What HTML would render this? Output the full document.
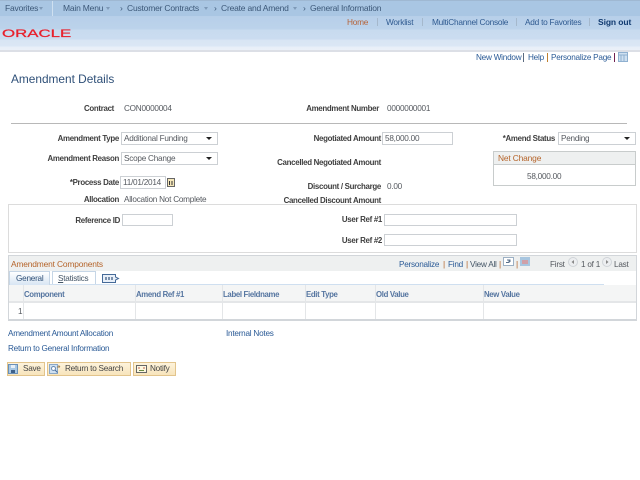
<!DOCTYPE html>
<html><head><meta charset="utf-8"><style>
html,body{margin:0;padding:0;background:#fff;}
body{width:640px;height:480px;position:relative;overflow:hidden;font-family:"Liberation Sans",Arial,sans-serif;font-size:8.2px;letter-spacing:-.24px;color:#55595f;}
#w{position:absolute;left:0;top:0;width:640px;height:480px;filter:blur(.25px);}
.a{position:absolute;white-space:nowrap;line-height:11px;}
.n{font-size:8.5px;letter-spacing:-.2px;color:#3c5878;}
.t{font-size:8.3px;letter-spacing:-.25px;color:#2f5a90;}
.l{position:absolute;white-space:nowrap;line-height:11px;font-weight:bold;color:#3e3e3e;font-size:7.9px;letter-spacing:-.3px;text-align:right;}
.b{position:absolute;box-sizing:border-box;}
.i{position:absolute;box-sizing:border-box;background:#fff;border:1px solid #ccd0d4;line-height:11px;padding:0 2px;color:#55595f;white-space:nowrap;}
.s:after{content:"";position:absolute;right:5px;top:4px;border-left:3px solid transparent;border-right:3px solid transparent;border-top:3px solid #222;}
.lk{color:#2a5a96;}
.h{font-weight:bold;color:#5575a0;font-size:7.8px;letter-spacing:-.33px;}
.o{color:#b5642a;font-size:8.4px;letter-spacing:-.15px;}
.btn{position:absolute;box-sizing:border-box;height:14px;top:362px;background:linear-gradient(#fdf3dc,#f7e4bc);border:1px solid #e2c48c;line-height:12px;color:#444;white-space:nowrap;}
.d{position:absolute;top:7px;border-left:2.5px solid transparent;border-right:2.5px solid transparent;border-top:3px solid #7f9ab8;}
svg{position:absolute;}
</style></head><body><div id="w">
<div class="b" style="left:0;top:0;width:640px;height:51px;background:linear-gradient(#b4cde8 0,#b4cde8 16px,#b7cfe9 16px,#bcd3eb 29px,#c8dbef 30px,#cbdcf0 39px,#d8e5f4 40px,#dbe7f5 46px,#e8eff8 47px,#eaf0f8 50px);"></div>
<div class="b" style="left:0;top:0;width:640px;height:16px;background:#a9c6e3;border-top:1px solid #9fb8d2;"></div>
<div class="b" style="left:0;top:50px;width:640px;height:2px;background:#dcdfe6;"></div>
<div class="b" style="left:52px;top:1px;width:1px;height:15px;background:#cfe0f0;"></div>
<div class="a n" style="left:5px;top:3px;">Favorites</div><div class="d" style="left:39px"></div>
<div class="a n" style="left:63px;top:3px;">Main Menu</div><div class="d" style="left:106px"></div>
<div class="a n" style="left:120px;top:3px;">›</div>
<div class="a n" style="left:127px;top:3px;">Customer Contracts</div><div class="d" style="left:204px"></div>
<div class="a n" style="left:214px;top:3px;">›</div>
<div class="a n" style="left:221px;top:3px;">Create and Amend</div><div class="d" style="left:293px"></div>
<div class="a n" style="left:303px;top:3px;">›</div>
<div class="a n" style="left:310px;top:3px;">General Information</div>
<div class="a" style="left:2px;top:27px;color:#e8202c;font-size:11px;letter-spacing:0;line-height:14px;transform:scaleX(1.53);transform-origin:left;-webkit-text-stroke:.25px #e8202c;">ORACLE</div>
<div class="a t" style="left:347px;top:17px;color:#b5643a;">Home</div>
<div class="b" style="left:377px;top:18px;width:1px;height:8px;background:#a5b8cc;"></div>
<div class="a t" style="left:386px;top:17px;">Worklist</div>
<div class="b" style="left:422px;top:18px;width:1px;height:8px;background:#a5b8cc;"></div>
<div class="a t" style="left:432px;top:17px;">MultiChannel Console</div>
<div class="b" style="left:516px;top:18px;width:1px;height:8px;background:#a5b8cc;"></div>
<div class="a t" style="left:525px;top:17px;">Add to Favorites</div>
<div class="b" style="left:589px;top:18px;width:1px;height:8px;background:#a5b8cc;"></div>
<div class="a" style="left:598px;top:17px;color:#103a70;font-weight:bold;font-size:8.5px;letter-spacing:-.1px;">Sign out</div>

<div class="a lk" style="left:476px;top:52px;">New Window</div>
<div class="b" style="left:523px;top:53px;width:1px;height:9px;background:#5a6a80;"></div>
<div class="a lk" style="left:528px;top:52px;">Help</div>
<div class="b" style="left:547px;top:53px;width:1px;height:9px;background:#c08030;"></div>
<div class="a lk" style="left:551px;top:52px;">Personalize Page</div>
<div class="b" style="left:614px;top:53px;width:1px;height:9px;background:#702050;"></div>
<svg style="left:618px;top:52px" width="10" height="10"><rect x=".5" y=".5" width="9" height="9" fill="#cfe0f0" stroke="#8fb0d0"/><path d="M1 3h8M3 3v6M6 3v6" stroke="#8fb0d0" fill="none"/></svg>

<div class="a" style="left:11px;top:72px;font-size:11.85px;letter-spacing:0;line-height:14px;color:#2f5078;">Amendment Details</div>

<div class="l" style="right:526px;top:103px;">Contract</div>
<div class="a" style="left:124px;top:103px;">CON0000004</div>
<div class="l" style="right:261px;top:103px;">Amendment Number</div>
<div class="a" style="left:387px;top:103px;">0000000001</div>
<div class="b" style="left:11px;top:123px;width:616px;height:1px;background:#b8b8b8;"></div>

<div class="l" style="right:521px;top:133px;">Amendment Type</div>
<div class="i s" style="left:121px;top:132px;width:97px;height:13px;">Additional Funding</div>
<div class="l" style="right:521px;top:153px;">Amendment Reason</div>
<div class="i s" style="left:121px;top:152px;width:97px;height:13px;">Scope Change</div>
<div class="l" style="right:521px;top:177px;">*Process Date</div>
<div class="i" style="left:120px;top:176px;width:46px;height:13px;">11/01/2014</div>
<svg style="left:167px;top:178px" width="8" height="9"><rect x=".5" y=".5" width="7" height="8" fill="#f4e6b8" stroke="#666"/><path d="M2.5 3v4M5 3v4" stroke="#333" fill="none"/></svg>
<div class="l" style="right:521px;top:194px;">Allocation</div>
<div class="a" style="left:124px;top:194px;">Allocation Not Complete</div>

<div class="l" style="right:259px;top:133px;">Negotiated Amount</div>
<div class="i" style="left:382px;top:132px;width:71px;height:13px;">58,000.00</div>
<div class="l" style="right:259px;top:157px;">Cancelled Negotiated Amount</div>
<div class="l" style="right:259px;top:181px;">Discount / Surcharge</div>
<div class="a" style="left:387px;top:181px;">0.00</div>
<div class="l" style="right:259px;top:195px;">Cancelled Discount Amount</div>

<div class="l" style="right:85px;top:133px;">*Amend Status</div>
<div class="i s" style="left:558px;top:132px;width:78px;height:13px;">Pending</div>
<div class="b" style="left:493px;top:151px;width:143px;height:35px;border:1px solid #c8cccc;"></div>
<div class="b" style="left:494px;top:152px;width:141px;height:13px;background:#eef0f0;border-bottom:1px solid #c8cccc;"></div>
<div class="a o" style="left:498px;top:153px;">Net Change</div>
<div class="a" style="left:527px;top:171px;">58,000.00</div>

<div class="b" style="left:8px;top:204px;width:629px;height:49px;border:1px solid #dcdcdc;"></div>
<div class="l" style="right:520px;top:215px;">Reference ID</div>
<div class="i" style="left:122px;top:214px;width:51px;height:12px;"></div>
<div class="l" style="right:258px;top:214px;">User Ref #1</div>
<div class="i" style="left:384px;top:214px;width:133px;height:12px;"></div>
<div class="l" style="right:258px;top:235px;">User Ref #2</div>
<div class="i" style="left:384px;top:234px;width:133px;height:12px;"></div>

<div class="b" style="left:8px;top:255px;width:629px;height:66px;border:1px solid #d2d6da;border-bottom-width:2px;"></div>
<div class="b" style="left:9px;top:256px;width:627px;height:15px;background:#eef0f0;"></div>
<div class="a o" style="left:11px;top:259px;">Amendment Components</div>
<div class="a lk" style="left:399px;top:259px;">Personalize</div>
<div class="a o" style="left:443px;top:259px;">|</div>
<div class="a lk" style="left:448px;top:259px;">Find</div>
<div class="a o" style="left:466px;top:259px;">|</div>
<div class="a" style="left:470px;top:259px;color:#456;">View All</div>
<div class="a o" style="left:499px;top:259px;">|</div>
<svg style="left:503px;top:257px" width="11" height="9"><rect x=".5" y=".5" width="10" height="8" fill="#fff" stroke="#9cb0c4"/><path d="M3 5.5h3V3M4 3h3v2" stroke="#58708c" fill="none"/></svg>
<div class="a o" style="left:516px;top:259px;">|</div>
<svg style="left:520px;top:257px" width="10" height="9"><rect width="10" height="9" fill="#a8c6e0"/><rect x="2" y="3" width="6" height="4" fill="#d0a0a8"/></svg>
<div class="a" style="left:550px;top:259px;">First</div>
<svg style="left:568px;top:257px" width="10" height="10"><circle cx="5" cy="5" r="4.5" fill="#eceef0" stroke="#d0d4d8"/><path d="M6 3L3.5 5 6 7z" fill="#888"/></svg>
<div class="a" style="left:581px;top:259px;">1 of 1</div>
<svg style="left:602px;top:257px" width="10" height="10"><circle cx="5" cy="5" r="4.5" fill="#eceef0" stroke="#d0d4d8"/><path d="M4 3L6.5 5 4 7z" fill="#888"/></svg>
<div class="a" style="left:614px;top:259px;">Last</div>

<div class="b" style="left:9px;top:271px;width:41px;height:14px;background:linear-gradient(#fff,#d8e5f3);border:1px solid #c6d6e6;border-bottom:none;"></div>
<div class="a" style="left:16px;top:273px;color:#2f5078;">General</div>
<div class="b" style="left:52px;top:271px;width:44px;height:14px;background:#fff;border:1px solid #c6d6e6;"></div>
<div class="a" style="left:58px;top:273px;color:#456;"><u>S</u>tatistics</div>
<svg style="left:102px;top:274px" width="18" height="9"><path d="M.5.5h13v2.5l3 1.5-3 1.5v2.5H.5z" fill="#e8eff8" stroke="#456a98"/><path d="M3 4.5h8" stroke="#7a90ac" stroke-width="3" stroke-dasharray="2 1"/></svg>
<div class="b" style="left:50px;top:284px;width:554px;height:1px;background:#cfdff0;"></div>

<div class="b" style="left:9px;top:285px;width:627px;height:18px;background:#f4f5f5;border-bottom:2px solid #e4e6e8;"></div>
<div class="a h" style="left:24px;top:289px;">Component</div>
<div class="a h" style="left:136px;top:289px;">Amend Ref #1</div>
<div class="a h" style="left:223px;top:289px;">Label Fieldname</div>
<div class="a h" style="left:306px;top:289px;">Edit Type</div>
<div class="a h" style="left:376px;top:289px;">Old Value</div>
<div class="a h" style="left:484px;top:289px;">New Value</div>
<div class="b" style="left:23px;top:285px;width:1px;height:34px;background:#e4e6e8;"></div>
<div class="b" style="left:135px;top:285px;width:1px;height:34px;background:#e4e6e8;"></div>
<div class="b" style="left:222px;top:285px;width:1px;height:34px;background:#e4e6e8;"></div>
<div class="b" style="left:305px;top:285px;width:1px;height:34px;background:#e4e6e8;"></div>
<div class="b" style="left:375px;top:285px;width:1px;height:34px;background:#e4e6e8;"></div>
<div class="b" style="left:483px;top:285px;width:1px;height:34px;background:#e4e6e8;"></div>
<div class="a" style="left:18px;top:306px;">1</div>

<div class="a lk" style="left:8px;top:328px;">Amendment Amount Allocation</div>
<div class="a lk" style="left:226px;top:328px;">Internal Notes</div>
<div class="a lk" style="left:8px;top:343px;">Return to General Information</div>

<div class="btn" style="left:7px;width:38px;padding-left:15px;">Save</div>
<svg style="left:8px;top:364px" width="10" height="10"><rect x=".5" y=".5" width="9" height="9" fill="#a8c8e4" stroke="#6a90b8"/><rect x="3" y="1" width="4" height="3" fill="#e8f0f8"/><rect x="3" y="6" width="4" height="3" fill="#3e6088"/></svg>
<div class="btn" style="left:47px;width:84px;padding-left:17px;">Return to Search</div>
<svg style="left:49px;top:364px" width="12" height="10"><rect x=".5" y=".5" width="8" height="9" fill="#cfe0f0" stroke="#8aa8c8"/><circle cx="4.5" cy="4.5" r="2" fill="#fff" stroke="#6a8ab0"/><path d="M6 6l2.5 2.5" stroke="#456a98"/><path d="M8 3h3M9.5 1.5l1.5 1.5" stroke="#a08050" fill="none"/></svg>
<div class="btn" style="left:133px;width:43px;padding-left:16px;">Notify</div>
<svg style="left:136px;top:365px" width="11" height="8"><rect x=".5" y=".5" width="10" height="7" fill="#fdf8e0" stroke="#666"/><path d="M2 3h2M7 3h2" stroke="#c06050"/><path d="M3 5.5h5" stroke="#6a8a40"/></svg>
</div></body></html>
